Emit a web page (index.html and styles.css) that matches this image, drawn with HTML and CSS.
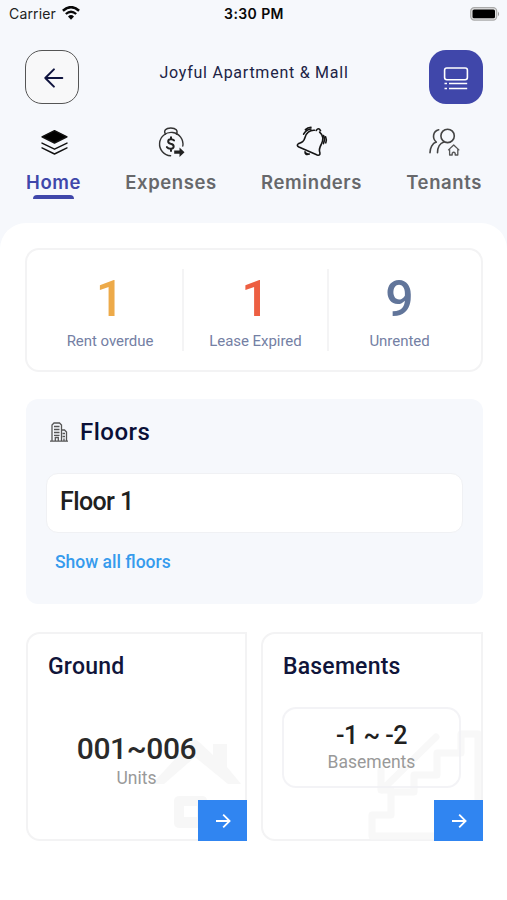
FILE: index.html
```html
<!DOCTYPE html>
<html lang="en">
<head>
<meta charset="utf-8">
<title>Joyful Apartment &amp; Mall</title>
<link rel="stylesheet" href="styles.css">
</head>
<body>
<div class="status">
  <div class="carrier"><span>Carrier</span>
    <svg width="18" height="14" viewBox="0 0 18 14" fill="none" stroke="#080808"><path d="M.9 4.7Q9-2.4 17.1 4.7" stroke-width="2.5"/><path d="M3.8 8Q9 3.5 14.2 8" stroke-width="2.3"/><path d="M6 10.4Q9 7.8 12 10.4L9 13.7Z" fill="#080808" stroke="none"/></svg>
  </div>
  <strong class="time">3:30 PM</strong>
  <svg class="battery" width="30" height="14" viewBox="0 0 30 14"><rect x=".7" y=".7" width="26" height="12.4" rx="3.6" fill="#e2e2e3" stroke="#aaa" stroke-width="1.2"/><rect x="2.5" y="2.5" width="22.5" height="8.8" rx="1.6"/><path d="M28 4.6q2.2 2.3 0 4.6z" fill="#999"/></svg>
</div>
<header class="header">
  <button class="back" aria-label="Back"><svg width="20" height="20" viewBox="0 0 20 20" fill="none" stroke="#10143f" stroke-width="2" stroke-linecap="round" stroke-linejoin="round"><path d="M18.3 10H1.3M9.9 1.4L1.3 10l8.6 8.6"/></svg></button>
  <h1>Joyful Apartment &amp; Mall</h1>
  <button class="view" aria-label="View"><svg width="26" height="26" viewBox="0 0 26 26" fill="none" stroke="#fff" stroke-width="1.6"><rect x="1.6" y="2" width="22.8" height="11.8" rx="2.2"/><path d="M1.500 17.500h2.500M6 17.500h18.200M1.500 22.500h2.500M6 22.500h18.200"/></svg></button>
</header>
<nav class="tabs">
  <a class="tab active"><svg width="30" height="32" viewBox="0 0 30 32" fill="none" stroke="#111" stroke-width="1.4" stroke-linejoin="round" stroke-linecap="round"><path d="M15.500 4.600L28 10.800 15.500 17 3 10.800z" fill="#000"/><path d="M3 17.100l12.500 6.100L28 17.100M3 21.900l12.500 6.100L28 21.900"/></svg><span>Home</span></a>
  <a class="tab"><svg width="30" height="32" viewBox="0 0 30 32" fill="none" stroke="#333" stroke-width="1.400" stroke-linecap="round"><path d="M14.600 29.800A11.700 11.700 0 1 1 26.800 20"/><path d="M9.400 8.200C7.400 4.800 9.600 2 14.800 2s7.500 2.800 5.600 6.200"/><path d="M18 14.400q-1.200-1.400-3.300-1.200c-3.200.2-3.500 3.800 0 4.600 4 .8 3.800 4.800.2 5-2 .1-3.200-.6-4-1.700M15 11.300v2M15 23v2" stroke-width="2" stroke="#222"/><path d="M18.200 24.600h5.300v-3.200l5 4.800-5 4.800v-3.200h-5.300z" fill="#222" stroke="none"/></svg><span>Expenses</span></a>
  <a class="tab"><svg width="32" height="32" viewBox="0 0 32 32" fill="none" stroke="#151515" stroke-width="1.600" stroke-linecap="round" stroke-linejoin="round"><path d="M18.500 4.300C13 4 10.200 7.500 9 11.500 7.800 16 5.700 16.500 2.500 17.600q-2.500 1.700.4 3.400L21.200 29q3.100.8 2.700-2.200c-1.300-3.200-.5-5.100 1.300-8.300C28 13 26.500 8.500 23.600 6.100"/><path d="M20.200 4.500q2.400-3.500 4.300.2M7.600 8.200Q9.900 3.800 15 3M9.400 3.700Q11.600 1.700 15 1.300M27.600 9.600q1.600 3.900-.2 8M29.600 10.800q1.400 3 .2 6"/><path d="M9 25.800q0 3.800 4.300 2.300" fill="#151515"/></svg><span>Reminders</span></a>
  <a class="tab"><svg width="32" height="32" viewBox="0 0 32 32" fill="none" stroke="#444" stroke-width="1.600" stroke-linecap="round" stroke-linejoin="round"><circle cx="19.600" cy="9.900" r="6.700"/><path d="M9.500 26.700C9.500 21.500 12 17 16 15.900M2 26.700C2 22 4.300 17.300 8.300 16.100M10.700 3.700C4.800 5.200 3.900 12.200 8.300 16.100"/><path d="M20.500 23.900l5.200-4.900 5.200 4.900M21.600 23v6h2.600v-1.800q1.500-1.900 3 0V29h2.600v-6" stroke="#555" stroke-width="1.300"/></svg><span>Tenants</span></a>
</nav>
<main>
  <section class="stats">
    <div class="stat overdue"><b>1</b><span>Rent overdue</span></div>
    <div class="stat expired"><b>1</b><span>Lease Expired</span></div>
    <div class="stat unrented"><b>9</b><span>Unrented</span></div>
  </section>
  <section class="floors">
    <h2><svg width="18" height="20" viewBox="0 0 18 20" fill="none" stroke="#555" stroke-width="1.300"><path d="M0 19.200h18M2 19V3L4 1h5.500l2 2v16M11.500 8h3l2 2v9M5.300 19v-3.500h3V19"/><path d="M4 4.500h5.500M4 7.500h5.500M4 10.500h5.500M4 13.300h5.500M12.500 11.500h2.500M12.500 14.500h2.500M14 16.500v2.500" stroke-width="1.300"/></svg><span>Floors</span></h2>
    <div class="floor"><span>Floor 1</span></div>
    <a class="show"><span>Show all floors</span></a>
  </section>
  <section class="cards">
    <article class="card">
      <svg class="art" width="219" height="209" viewBox="0 0 219 209" fill="#f7f7f7"><path d="M125 152l39-42q4-4 8 0l14 13v-11h14v23l14 17h-13l-33-27-31 27z"/><path d="M153 164h22q5 0 5 5v22q0 5-5 5h-22q-6 0-6-5v-22q0-5 6-5zm4 10v11h13v-11z" fill-rule="evenodd"/></svg>
      <h3>Ground</h3>
      <div class="units"><b>001~006</b><span>Units</span></div>
      <button class="go" aria-label="Open ground"><svg width="16" height="16" viewBox="0 0 16 16" fill="none" stroke="#fff" stroke-width="1.800"><path d="M1 8h14M8.200 1.600L14.600 8l-6.400 6.400"/></svg></button>
    </article>
    <article class="card">
      <svg class="art" width="219" height="209" viewBox="0 0 219 209" fill="none" stroke="#f8f8f8" stroke-width="7" stroke-linejoin="round" stroke-linecap="round"><path d="M216 102h-17v19h-24v22h-23v17h-23v23h-19v21h106zM174 105l-54 53M119 138v20h10"/></svg>
      <h3>Basements</h3>
      <div class="levels"><b>-1 ~ -2</b><span>Basements</span></div>
      <button class="go" aria-label="Open basements"><svg width="16" height="16" viewBox="0 0 16 16" fill="none" stroke="#fff" stroke-width="1.800"><path d="M1 8h14M8.200 1.600L14.600 8l-6.400 6.400"/></svg></button>
    </article>
  </section>
</main>
</body>
</html>
```
FILE: styles.css
```css
* { box-sizing: border-box; }
body { margin: 0; height: 900px; background: #f6f8fc; font-family: Roboto, "Liberation Sans", sans-serif; overflow: hidden; }
h1, h2, h3 { margin: 0; font-weight: 500; }
button { border: 0; padding: 0; display: grid; place-items: center; }
svg { display: block; flex: none; }
.status { height: 28px; padding: 0 7px 0 9px; display: grid; grid-template-columns: 1fr auto 1fr; align-items: center; font: 14px/28px Inter, sans-serif; color: #222; }
.carrier { display: flex; align-items: center; gap: 6px; letter-spacing: .15px; }
.carrier svg { margin-top: -2px; }
.time { font-weight: 600; letter-spacing: .4px; color: #080808; margin-right: 1px; }
.battery { justify-self: end; margin-top: -1px; }
.header { height: 76px; padding: 22px 24px 0 25px; display: flex; justify-content: space-between; align-items: flex-start; }
.back, .view { width: 54px; height: 54px; border-radius: 17px; }
.back { background: #f8f8f9; border: 1px solid #555; }
.back svg { margin: 2px 0 0 4px; }
.view { background: #4047aa; }
.view svg { margin-top: 4px; }
h1 { font-size: 16px; line-height: 46px; font-weight: 400; letter-spacing: .75px; color: #202345; }
.tabs { height: 119px; padding: 22px 25px 0 26px; display: flex; justify-content: space-between; font-family: Inter, sans-serif; }
.tab { height: 74px; display: flex; flex-direction: column; align-items: center; color: #67686b; }
.tab span { font-size: 18.5px; line-height: 24px; font-weight: 600; letter-spacing: .6px; margin-top: 12px; }
.tab.active { color: #4047aa; }
.tab.active::after { content: ""; width: 41px; height: 4px; margin-top: 1px; border-radius: 4px 4px 0 0; background: #4047aa; }
main { height: 677px; padding: 25px 24px 0 25px; border-radius: 26px 26px 0 0; background: #fff; }
.stats { height: 124px; border: 2px solid #f3f3f4; border-radius: 14px; padding: 19px 11px 0 11px; display: grid; grid-template-columns: 144px 145px 1fr; }
.stat { height: 82px; display: flex; flex-direction: column; align-items: center; }
.stat + .stat { border-left: 2px solid #f4f4f5; }
.stat b { font-size: 50px; line-height: 60px; font-weight: 500; }
.stat span { font-size: 15px; line-height: 20px; margin-top: 2px; letter-spacing: -.05px; color: #7480a4; }
.overdue b { color: #edaa49; }
.expired b { color: #ed5f42; }
.unrented b { color: #61759a; }
.floors { height: 205px; margin: 27px 0 0 1px; padding: 18px 20px 0; border-radius: 12px; background: #f6f8fc; }
h2 { display: flex; align-items: center; padding-left: 4px; gap: 12px; font-size: 24px; line-height: 30px; letter-spacing: .5px; color: #0b1037; }
.floor { height: 60px; margin-top: 26px; padding-left: 13px; border: 1px solid #f0f1f4; border-radius: 12px; background: #fff; font-size: 25px; line-height: 56px; font-weight: 500; letter-spacing: -.6px; color: #202020; }
.show { display: block; margin: 17px 0 0 9px; font-size: 17.5px; line-height: 24px; font-weight: 500; color: #369bed; }
.cards { margin: 28px 0 0 1px; display: grid; grid-template-columns: 221px 222px; gap: 14px; }
.card { position: relative; height: 209px; padding: 19px 20px 0; border: 2px solid #f3f3f4; border-radius: 14px 0 0 14px; }
.art { position: absolute; left: -1px; top: -2px; }
.card > h3, .card > div { position: relative; }
h3 { font-size: 23px; line-height: 28px; letter-spacing: .2px; color: #10153a; }
.units, .levels { display: flex; flex-direction: column; align-items: center; }
.units { margin-top: 50px; }
.units b { font-size: 30px; line-height: 36px; font-weight: 500; letter-spacing: -.4px; color: #2a2a2a; }
.units span, .levels span { font-size: 17.5px; line-height: 22px; color: #999; }
.levels { width: 179px; height: 81px; margin-top: 26px; margin-left: -1px; padding-top: 12px; border: 2px solid rgba(240, 240, 244, .8); border-radius: 14px; }
.levels b { font-size: 25px; line-height: 30px; font-weight: 500; letter-spacing: -.5px; color: #202020; }
.go { position: absolute; right: -2px; bottom: -2px; width: 49px; height: 41px; background: #3085f1; }
```
